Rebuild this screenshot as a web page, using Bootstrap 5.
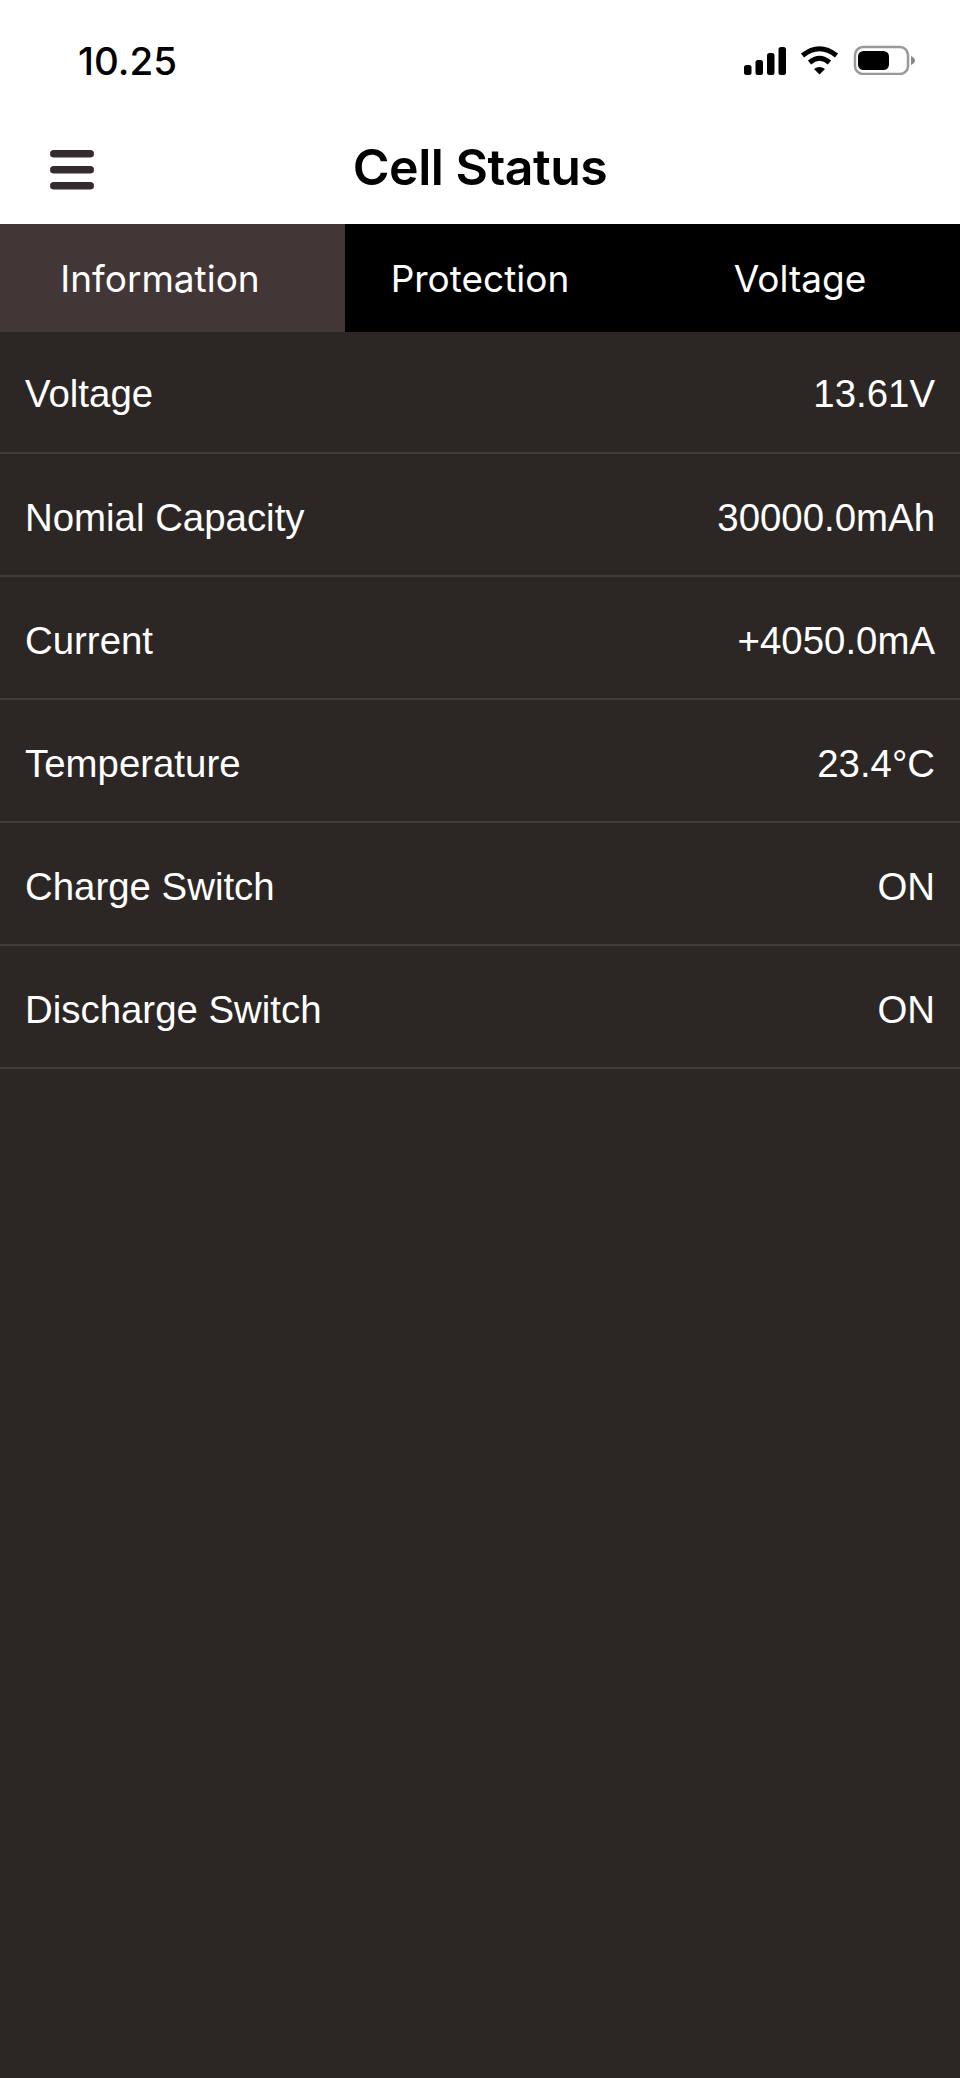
<!DOCTYPE html>
<html lang="en">
<head>
  <meta charset="UTF-8">
  <title>Cell Status</title>
  <meta name="viewport" content="width=device-width, initial-scale=1">
  <link href="https://cdn.jsdelivr.net/npm/bootstrap@5.3.3/dist/css/bootstrap.min.css" rel="stylesheet">
  <style>
    html, body { height: 100%; }
    body {
      background-color: #2c2725;
      color: #fff;
      font-family: "Liberation Sans", Arial, sans-serif;
    }
    .status-bar {
      height: 106px;
      padding: 14px 45px 0 78px;
    }
    .status-time {
      font-family: Inter, sans-serif;
      font-size: 38.5px;
      font-weight: 500;
      color: #000;
      line-height: 1;
      margin-top: 2px;
    }
    .title-bar { height: 118px; padding: 10px 0 0 50px; }
    .menu-btn { width: 44px; height: 40px; }
    .page-title {
      font-family: Inter, sans-serif;
      font-size: 50px;
      font-weight: 600;
      color: #000;
      line-height: 1;
      letter-spacing: -0.5px;
      margin: 0 0 6px;
    }
    .cell-tabs { height: 108px; background: #000; }
    .cell-tabs .nav-link {
      font-family: Inter, sans-serif;
      font-size: 37px;
      font-weight: 400;
      color: #fff;
      padding: 0;
      border-radius: 0;
      height: 108px;
      line-height: 110px;
      text-align: center;
    }
    .cell-tabs .nav-link.active { background: #423736; color: #fff; padding-right: 25px; }
    .tab-first { width: 345px; }
    .tab-second { width: 270px; }
    .tab-third { width: 345px; }
    .tab-third .nav-link { padding-left: 25px; }
    .stat-list .list-group-item,
    .stat-list .list-group-item:last-child {
      background: transparent;
      color: #fff;
      height: 123px;
      padding: 6px 25px 0;
      font-size: 38.4px;
      border-color: #403d3c;
      border-width: 0 0 2px;
    }
    .stat-list .list-group-item:first-child { height: 122px; padding-top: 4px; }
  </style>
</head>
<body>

  <header class="bg-white">
    <div class="status-bar d-flex justify-content-between align-items-center">
      <span class="status-time">10.25</span>
      <svg width="171" height="30" viewBox="0 0 171 30" aria-hidden="true">
        <rect x="0" y="20" width="7.5" height="10" rx="2.5" fill="#000"/>
        <rect x="11.5" y="15" width="7.5" height="15" rx="2.5" fill="#000"/>
        <rect x="23" y="8" width="7.5" height="22" rx="2.5" fill="#000"/>
        <rect x="34.5" y="2" width="7.5" height="28" rx="2.5" fill="#000"/>
        <path d="M58.5 10.5 Q75.5 -3 92.5 10.5" fill="none" stroke="#000" stroke-width="5"/>
        <path d="M65.5 17.5 Q75.5 9 85.5 17.5" fill="none" stroke="#000" stroke-width="5"/>
        <path d="M70 24 Q75.5 20 81 24 L75.5 29.5 Z" fill="#000"/>
        <rect x="111" y="2" width="53" height="27" rx="8" fill="none" stroke="#999" stroke-width="2.5"/>
        <rect x="114" y="6" width="31" height="19" rx="5.5" fill="#000"/>
        <path d="M167 11 Q171 13 171 15.5 Q171 18 167 20 Z" fill="#888"/>
      </svg>
    </div>
    <div class="title-bar d-flex align-items-center position-relative">
      <svg class="menu-btn" viewBox="0 0 44 40" aria-hidden="true">
        <g fill="#352b2c">
          <rect x="0" y="0" width="44" height="7.5" rx="3.75"/>
          <rect x="0" y="16" width="44" height="7.5" rx="3.75"/>
          <rect x="0" y="32" width="44" height="7.5" rx="3.75"/>
        </g>
      </svg>
      <h1 class="page-title position-absolute start-50 translate-middle-x">Cell Status</h1>
    </div>
  </header>

  <ul class="nav cell-tabs flex-nowrap">
    <li class="nav-item tab-first"><a class="nav-link active" href="#">Information</a></li>
    <li class="nav-item tab-second"><a class="nav-link" href="#">Protection</a></li>
    <li class="nav-item tab-third"><a class="nav-link" href="#">Voltage</a></li>
  </ul>

  <ul class="list-group list-group-flush stat-list">
    <li class="list-group-item d-flex justify-content-between align-items-center"><span>Voltage</span><span>13.61V</span></li>
    <li class="list-group-item d-flex justify-content-between align-items-center"><span>Nomial Capacity</span><span>30000.0mAh</span></li>
    <li class="list-group-item d-flex justify-content-between align-items-center"><span>Current</span><span>+4050.0mA</span></li>
    <li class="list-group-item d-flex justify-content-between align-items-center"><span>Temperature</span><span>23.4°C</span></li>
    <li class="list-group-item d-flex justify-content-between align-items-center"><span>Charge Switch</span><span>ON</span></li>
    <li class="list-group-item d-flex justify-content-between align-items-center"><span>Discharge Switch</span><span>ON</span></li>
  </ul>

  <script src="https://cdn.jsdelivr.net/npm/bootstrap@5.3.3/dist/js/bootstrap.bundle.min.js"></script>
</body>
</html>
